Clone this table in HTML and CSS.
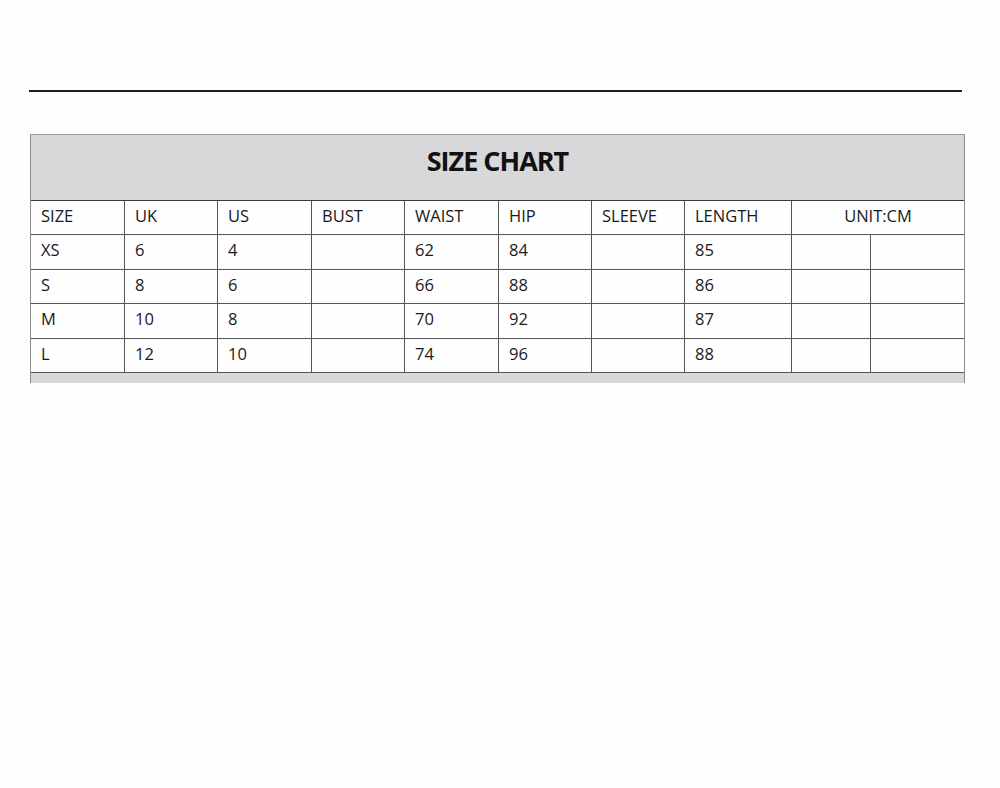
FILE: index.html
```html
<!DOCTYPE html>
<html>
<head>
<meta charset="utf-8">
<link rel="stylesheet" href="styles.css">
</head>
<body>
<div class="page">
  <div class="rule"></div>
  <div class="chart">
    <div class="title">SIZE CHART</div>
    <div class="cell">SIZE</div><div class="cell">UK</div><div class="cell">US</div><div class="cell">BUST</div><div class="cell">WAIST</div><div class="cell">HIP</div><div class="cell">SLEEVE</div><div class="cell">LENGTH</div><div class="cell unit last">UNIT:CM</div>
    <div class="cell">XS</div><div class="cell">6</div><div class="cell">4</div><div class="cell"></div><div class="cell">62</div><div class="cell">84</div><div class="cell"></div><div class="cell">85</div><div class="cell"></div><div class="cell last"></div>
    <div class="cell">S</div><div class="cell">8</div><div class="cell">6</div><div class="cell"></div><div class="cell">66</div><div class="cell">88</div><div class="cell"></div><div class="cell">86</div><div class="cell"></div><div class="cell last"></div>
    <div class="cell">M</div><div class="cell">10</div><div class="cell">8</div><div class="cell"></div><div class="cell">70</div><div class="cell">92</div><div class="cell"></div><div class="cell">87</div><div class="cell"></div><div class="cell last"></div>
    <div class="cell">L</div><div class="cell">12</div><div class="cell">10</div><div class="cell"></div><div class="cell">74</div><div class="cell">96</div><div class="cell"></div><div class="cell">88</div><div class="cell"></div><div class="cell last"></div>
    <div class="foot"></div>
  </div>
</div>
</body>
</html>
```
FILE: styles.css
```css
html, body {
  margin: 0;
  padding: 0;
  background: #fefefe;
}
.page {
  width: 1000px;
  height: 788px;
  padding-top: 90px;
  box-sizing: border-box;
  font-family: "Open Sans", "Noto Sans", sans-serif;
  color: #1a1a1a;
}
.rule {
  margin-left: 29px;
  width: 933px;
  height: 2px;
  background: #1e1e1e;
}
.chart {
  margin-top: 42px;
  margin-left: 30px;
  width: 935px;
  box-sizing: border-box;
  display: grid;
  grid-template-columns: 94px 93px 94px 93px 94px 93px 93px 107px 79px 93px;
  grid-template-rows: 66px 34px 35px 34px 35px 34px 10px;
  border-left: 1px solid #8a8a8a;
  border-right: 1px solid #8a8a8a;
  border-top: 1px solid #9a9a9a;
}
.title {
  grid-column: 1 / -1;
  background: #d8d7da;
  border-bottom: 1px solid #3a3a3a;
  display: flex;
  align-items: center;
  justify-content: center;
  font-weight: 700;
  font-size: 27px;
  letter-spacing: -1px;
  color: #111;
  padding-bottom: 14px;
  box-sizing: border-box;
}
.cell {
  border-bottom: 1px solid #555;
  border-right: 1px solid #555;
  font-size: 16.5px;
  display: flex;
  align-items: center;
  padding-left: 10px;
  padding-bottom: 3px;
  line-height: 1;
}
.cell.last {
  border-right: none;
}
.unit {
  grid-column: span 2;
  justify-content: center;
  padding-left: 0;
}
.foot {
  grid-column: 1 / -1;
  background: #d8d7da;
}
```
